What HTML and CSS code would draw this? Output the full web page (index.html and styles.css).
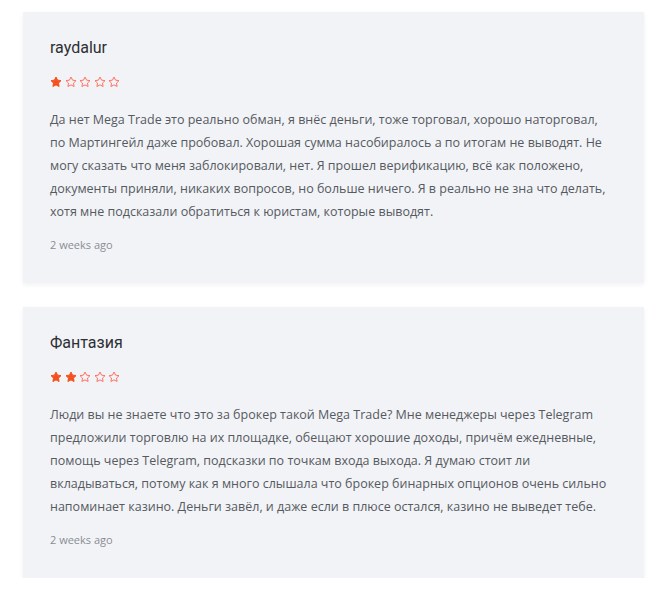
FILE: index.html
```html
<!DOCTYPE html>
<html lang="ru">
<head>
    <meta charset="UTF-8">
    <meta name="viewport" content="width=device-width, initial-scale=1.0">
    <title>Отзывы</title>
    <link rel="stylesheet" href="styles.css">
</head>
<body>
    <div class="reviews">
        <div class="review">
            <div class="review-author">raydalur</div>
            <div class="stars">
                <svg class="star filled" viewBox="0 0 24 24"><path d="M12 2l3.09 6.26L22 9.27l-5 4.87 1.18 6.88L12 17.77l-6.18 3.25L7 14.14 2 9.27l6.91-1.01L12 2z"/></svg>
                <svg class="star" viewBox="0 0 24 24"><path d="M12 2l3.09 6.26L22 9.27l-5 4.87 1.18 6.88L12 17.77l-6.18 3.25L7 14.14 2 9.27l6.91-1.01L12 2z"/></svg>
                <svg class="star" viewBox="0 0 24 24"><path d="M12 2l3.09 6.26L22 9.27l-5 4.87 1.18 6.88L12 17.77l-6.18 3.25L7 14.14 2 9.27l6.91-1.01L12 2z"/></svg>
                <svg class="star" viewBox="0 0 24 24"><path d="M12 2l3.09 6.26L22 9.27l-5 4.87 1.18 6.88L12 17.77l-6.18 3.25L7 14.14 2 9.27l6.91-1.01L12 2z"/></svg>
                <svg class="star" viewBox="0 0 24 24"><path d="M12 2l3.09 6.26L22 9.27l-5 4.87 1.18 6.88L12 17.77l-6.18 3.25L7 14.14 2 9.27l6.91-1.01L12 2z"/></svg>
            </div>
            <p class="review-text">Да нет Mega Trade это реально обман, я внёс деньги, тоже торговал, хорошо наторговал, по Мартингейл даже пробовал. Хорошая сумма насобиралось а по итогам не выводят. Не могу сказать что меня заблокировали, нет. Я прошел верификацию, всё как положено, документы приняли, никаких вопросов, но больше ничего. Я в реально не зна что делать, хотя мне подсказали обратиться к юристам, которые выводят.</p>
            <div class="review-date">2 weeks ago</div>
        </div>

        <div class="review">
            <div class="review-author">Фантазия</div>
            <div class="stars">
                <svg class="star filled" viewBox="0 0 24 24"><path d="M12 2l3.09 6.26L22 9.27l-5 4.87 1.18 6.88L12 17.77l-6.18 3.25L7 14.14 2 9.27l6.91-1.01L12 2z"/></svg>
                <svg class="star filled" viewBox="0 0 24 24"><path d="M12 2l3.09 6.26L22 9.27l-5 4.87 1.18 6.88L12 17.77l-6.18 3.25L7 14.14 2 9.27l6.91-1.01L12 2z"/></svg>
                <svg class="star" viewBox="0 0 24 24"><path d="M12 2l3.09 6.26L22 9.27l-5 4.87 1.18 6.88L12 17.77l-6.18 3.25L7 14.14 2 9.27l6.91-1.01L12 2z"/></svg>
                <svg class="star" viewBox="0 0 24 24"><path d="M12 2l3.09 6.26L22 9.27l-5 4.87 1.18 6.88L12 17.77l-6.18 3.25L7 14.14 2 9.27l6.91-1.01L12 2z"/></svg>
                <svg class="star" viewBox="0 0 24 24"><path d="M12 2l3.09 6.26L22 9.27l-5 4.87 1.18 6.88L12 17.77l-6.18 3.25L7 14.14 2 9.27l6.91-1.01L12 2z"/></svg>
            </div>
            <p class="review-text">Люди вы не знаете что это за брокер такой Mega Trade? Мне менеджеры через Telegram предложили торговлю на их площадке, обещают хорошие доходы, причём ежедневные, помощь через Telegram, подсказки по точкам входа выхода. Я думаю стоит ли вкладываться, потому как я много слышала что брокер бинарных опционов очень сильно напоминает казино. Деньги завёл, и даже если в плюсе остался, казино не выведет тебе.</p>
            <div class="review-date">2 weeks ago</div>
        </div>
    </div>
</body>
</html>
```

FILE: styles.css
```css
* {
    margin: 0;
    padding: 0;
    box-sizing: border-box;
}

body {
    font-family: "Open Sans", "Noto Sans", sans-serif;
    background-color: #fff;
    color: #555;
    padding: 12px 19px 0 23px;
}

.reviews {
    display: flex;
    flex-direction: column;
    gap: 24px;
}

.review {
    background: #f2f3f7;
    padding: 26px 30px 30px 27px;
    box-shadow: 0 2px 5px rgba(0, 0, 0, 0.06);
}

.review-author {
    font-family: Roboto, "Liberation Sans", Arial, sans-serif;
    font-size: 16px;
    line-height: 20px;
    color: #2d2f33;
}

.stars {
    display: flex;
    gap: 2.5px;
    margin-top: 16px;
    height: 16px;
    align-items: center;
}

.star {
    width: 12px;
    height: 12px;
    fill: none;
    stroke: #ff7262;
    stroke-width: 2;
    stroke-linejoin: round;
}

.star.filled {
    fill: #f4511e;
    stroke: #f4511e;
}

.review-text {
    margin-top: 18px;
    font-size: 12.5px;
    line-height: 23px;
    color: #555a60;
}

.review-date {
    margin-top: 14px;
    font-size: 11px;
    line-height: 16px;
    color: #8a8d92;
}
```
